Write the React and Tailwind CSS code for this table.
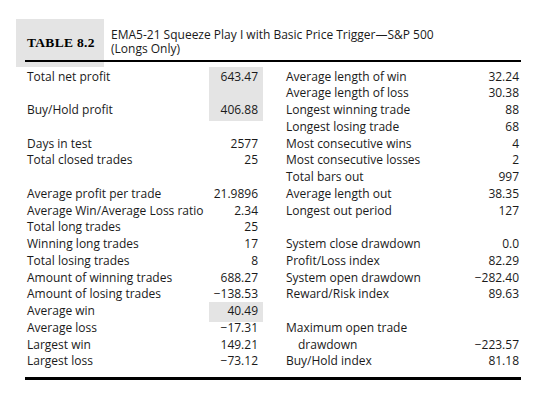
import React from 'react';

// left column: [label, value, highlight group]
const left = [
  ['Total net profit', '643.47', 'a'],
  ['', '', 'a'],
  ['Buy/Hold profit', '406.88', 'a'],
  ['', ''],
  ['Days in test', '2577'],
  ['Total closed trades', '25'],
  ['', ''],
  ['Average profit per trade', '21.9896'],
  ['Average Win/Average Loss ratio', '2.34'],
  ['Total long trades', '25'],
  ['Winning long trades', '17'],
  ['Total losing trades', '8'],
  ['Amount of winning trades', '688.27'],
  ['Amount of losing trades', '\u2212138.53'],
  ['Average win', '40.49', 'b'],
  ['Average loss', '\u221217.31'],
  ['Largest win', '149.21'],
  ['Largest loss', '\u221273.12'],
];

const right = [
  ['Average length of win', '32.24'],
  ['Average length of loss', '30.38'],
  ['Longest winning trade', '88'],
  ['Longest losing trade', '68'],
  ['Most consecutive wins', '4'],
  ['Most consecutive losses', '2'],
  ['Total bars out', '997'],
  ['Average length out', '38.35'],
  ['Longest out period', '127'],
  ['', ''],
  ['System close drawdown', '0.0'],
  ['Profit/Loss index', '82.29'],
  ['System open drawdown', '\u2212282.40'],
  ['Reward/Risk index', '89.63'],
  ['', ''],
  ['Maximum open trade', ''],
  ['drawdown', '\u2212223.57', null, true],
  ['Buy/Hold index', '81.18'],
];

const Row = ({ children, className = '' }) => (
  <div className={`h-[16.75px] leading-[16.75px] whitespace-nowrap ${className}`}>{children || '\u00a0'}</div>
);

// group consecutive values sharing a highlight key
const groupValues = (rows) => {
  const groups = [];
  rows.forEach((r) => {
    const last = groups[groups.length - 1];
    if (r[2] && last && last.key === r[2]) last.items.push(r[1]);
    else groups.push({ key: r[2] || null, items: [r[1]] });
  });
  return groups;
};

const App = () => {
  return (
    <div
      className="w-[547px] h-[403px] bg-white text-[#1a1a1a] pt-[19px] overflow-hidden"
      style={{ fontFamily: '"Open Sans", "Liberation Sans", sans-serif' }}
    >
      {/* Header */}
      <div className="flex items-start pl-[16px] h-[41px]">
        <div className="shrink-0 w-[88px] h-[48px] bg-[#e4e4e4] pl-[11px] pt-[17px]">
          <div
            className="font-bold text-[13.5px] tracking-[0.3px] leading-[13px] text-black"
            style={{ fontFamily: '"Liberation Serif", serif' }}
          >
            TABLE 8.2
          </div>
        </div>
        <div className="pl-[7px] pt-[9px] text-[12px] leading-[14px]">
          <div>EMA5-21 Squeeze Play I with Basic Price Trigger—S&amp;P 500</div>
          <div>(Longs Only)</div>
        </div>
      </div>
      <div className="relative z-10 ml-[25px] w-[496px] h-[2px] bg-black" />

      {/* Body */}
      <div className="ml-[25px] w-[496px] pt-[6.6px] flex text-[12px]">
        <div className="flex w-[238px]">
          <div className="flex-1 pl-[2px]">
            {left.map((r, i) => (
              <Row key={i}>{r[0]}</Row>
            ))}
          </div>
          <div className="w-[54px] text-right">
            {groupValues(left).map((g, i) => (
              <div
                key={i}
                className={g.key ? 'bg-[#e4e4e4] -mt-[1.6px] pt-[1.6px] -mb-[2.4px] pb-[2.4px] relative' : ''}
              >
                {g.items.map((v, j) => (
                  <Row key={j} className="pr-[5px]">{v}</Row>
                ))}
              </div>
            ))}
          </div>
        </div>
        <div className="flex-1 ml-[23px] pr-[2px]">
          {right.map((r, i) => (
            <Row key={i} className="flex justify-between">
              <span className={r[3] ? 'pl-[12px]' : ''}>{r[0] || '\u00a0'}</span>
              <span>{r[1]}</span>
            </Row>
          ))}
        </div>
      </div>
      <div className="ml-[25px] mt-[6.6px] w-[496px] h-[3px] bg-black" />
    </div>
  );
};

export default App;
